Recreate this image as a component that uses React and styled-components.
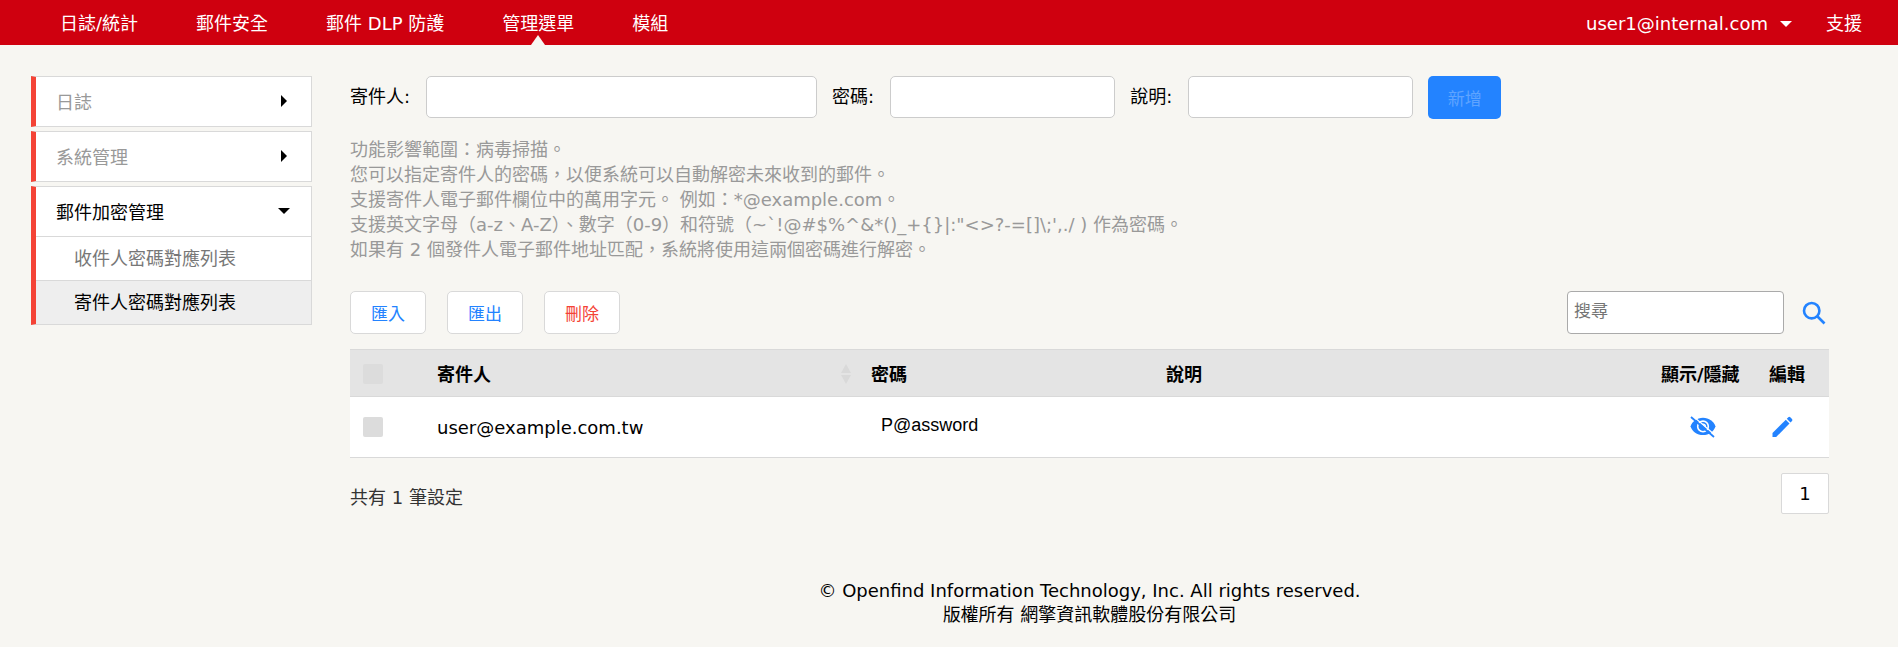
import React, { useState } from "react";
import styled, { createGlobalStyle } from "styled-components";

const menus = ["日誌/統計", "郵件安全", "郵件 DLP 防護", "管理選單", "模組"];

const notes = [
  "功能影響範圍：病毒掃描。",
  "您可以指定寄件人的密碼，以便系統可以自動解密未來收到的郵件。",
  "支援寄件人電子郵件欄位中的萬用字元。 例如：*@example.com。",
  "支援英文字母（a-z、A-Z）、數字（0-9）和符號（~`!@#$%^&*()_+{}|:\"<>?-=[]\\;',./ ) 作為密碼。",
  "如果有 2 個發件人電子郵件地址匹配，系統將使用這兩個密碼進行解密。",
];

const rows = [{ sender: "user@example.com.tw", password: "P@assword", note: "" }];

const SearchIcon = () => (
  <svg width="24" height="24" viewBox="0 0 24 24" fill="none" aria-hidden="true">
    <circle cx="9.700" cy="9.700" r="7.700" stroke="#2383ff" strokeWidth="2.600" />
    <path stroke="#2383ff" strokeWidth="2.600" d="M15 15L22.500 22.500" />
  </svg>
);

const EyeOff = () => (
  <svg width="26" height="22" viewBox="0 0 26 22" fill="none" aria-hidden="true">
    <path
      fill="#2383ff"
      d="M13 1.800C7 1.800 2.300 5.300 .5 10.400C2.300 15.500 7 19 13 19S23.700 15.500 25.500 10.400C23.700 5.300 19 1.800 13 1.800Z"
    />
    <circle cx="13" cy="10.400" r="5.300" stroke="#fff" strokeWidth="1.600" />
    <path stroke="#fff" strokeWidth="1.400" d="M12.500 8.200A2.300 2.300 0 0 1 15.300 11" />
    <path stroke="#fff" strokeWidth="1.200" d="M3.500 .5L25.500 19.500" />
    <path stroke="#2383ff" strokeWidth="1.800" d="M1 1L24 21" />
  </svg>
);

const PencilIcon = () => (
  <svg width="22" height="22" viewBox="0 0 22 22" fill="#2383ff" aria-hidden="true">
    <path d="M.5 17L13.800 3.700L17.500 7.400L4.200 21H.5Z" />
    <path d="M14.800 2.700L16.300 1.200Q17.300 .3 18.300 1.200L20 2.900Q20.900 3.900 20 4.900L18.500 6.400Z" />
  </svg>
);

const App = () => {
  const [form, setForm] = useState({ sender: "", password: "", note: "" });

  const update = (e) => setForm({ ...form, [e.target.name]: e.target.value });

  return (
    <>
      <GlobalStyle />
      <Header>
        <Nav>
          {menus.map((menu) => (
            <NavLink key={menu} href="#" $active={menu === "管理選單"}>
              {menu}
            </NavLink>
          ))}
        </Nav>
        <Account>
          <UserButton type="button">
            user1@internal.com
            <Arrow $down $color="#fff" />
          </UserButton>
          <a href="#">支援</a>
        </Account>
      </Header>

      <Layout>
        <Sidebar>
          <Panel>
            <PanelTitle type="button">
              日誌
              <Arrow />
            </PanelTitle>
          </Panel>
          <Panel>
            <PanelTitle type="button">
              系統管理
              <Arrow />
            </PanelTitle>
          </Panel>
          <Panel>
            <PanelTitle type="button" $active>
              郵件加密管理
              <Arrow $down />
            </PanelTitle>
            <SubLink href="#">收件人密碼對應列表</SubLink>
            <SubLink href="#" $active>
              寄件人密碼對應列表
            </SubLink>
          </Panel>
        </Sidebar>

        <Content>
          <Form onSubmit={(e) => e.preventDefault()}>
            <Field>
              寄件人:
              <TextInput $wide name="sender" value={form.sender} onChange={update} />
            </Field>
            <Field>
              密碼:
              <TextInput name="password" value={form.password} onChange={update} />
            </Field>
            <Field>
              說明:
              <TextInput name="note" value={form.note} onChange={update} />
            </Field>
            <AddButton disabled={!form.sender || !form.password}>新增</AddButton>
          </Form>

          <Notes>
            {notes.map((note) => (
              <p key={note}>{note}</p>
            ))}
          </Notes>

          <Toolbar>
            <ToolButton type="button">匯入</ToolButton>
            <ToolButton type="button">匯出</ToolButton>
            <ToolButton type="button" $danger>
              刪除
            </ToolButton>
            <Search>
              <SearchInput type="text" placeholder="搜尋" aria-label="搜尋" />
              <IconButton type="button" aria-label="搜尋">
                <SearchIcon />
              </IconButton>
            </Search>
          </Toolbar>

          <Table>
            <thead>
              <tr>
                <Th $width={75}>
                  <Checkbox type="checkbox" aria-label="全選" />
                </Th>
                <Th $width={434}>
                  <Sortable>
                    寄件人
                    <svg width="10" height="20" viewBox="0 0 10 20" fill="#d9d9d9">
                      <path d="M5 0L10 9H0ZM5 20L0 11H10Z" />
                    </svg>
                  </Sortable>
                </Th>
                <Th $width={295}>密碼</Th>
                <Th>說明</Th>
                <Th $width={108}>顯示/隱藏</Th>
                <Th $width={72}>編輯</Th>
              </tr>
            </thead>
            <tbody>
              {rows.map((row) => (
                <tr key={row.sender}>
                  <Td>
                    <Checkbox type="checkbox" aria-label={row.sender} />
                  </Td>
                  <Td>{row.sender}</Td>
                  <Td>
                    <PasswordInput readOnly value={row.password} aria-label="密碼" />
                  </Td>
                  <Td>{row.note}</Td>
                  <Td>
                    <IconButton type="button" aria-label="顯示/隱藏" $center>
                      <EyeOff />
                    </IconButton>
                  </Td>
                  <Td>
                    <IconButton type="button" aria-label="編輯">
                      <PencilIcon />
                    </IconButton>
                  </Td>
                </tr>
              ))}
            </tbody>
          </Table>

          <Pager>
            <Total>共有 1 筆設定</Total>
            <PageButton type="button">1</PageButton>
          </Pager>

          <Footer>
            <p>© Openfind Information Technology, Inc. All rights reserved.</p>
            <p>版權所有 網擎資訊軟體股份有限公司</p>
          </Footer>
        </Content>
      </Layout>
    </>
  );
};

const GlobalStyle = createGlobalStyle`
  * {
    box-sizing: border-box;
  }

  body {
    margin: 0;
    background-color: #f7f6f2;
    color: #000;
    font-size: 18px;
    line-height: 25px;
  }

  body, button, input {
    font-family: "DejaVu Sans", "Noto Sans CJK TC", sans-serif;
  }

  button, input {
    font-size: 18px;
  }

  button {
    cursor: pointer;
  }

  a {
    color: inherit;
    text-decoration: none;
  }

  p {
    margin: 0;
  }
`;

const Header = styled.header`
  display: flex;
  justify-content: space-between;
  height: 45px;
  padding: 0 36px 0 31px;
  background-color: #cf000f;
  color: #fff;
`;

const Nav = styled.nav`
  display: flex;
`;

const NavLink = styled.a`
  position: relative;
  padding: 0 29px;
  line-height: 47px;

  &::after {
    content: "";
    display: ${(props) => (props.$active ? "block" : "none")};
    position: absolute;
    bottom: 0;
    left: 50%;
    margin-left: -7px;
    border: 7px solid transparent;
    border-top: 0;
    border-bottom: 10px solid #f7f6f2;
  }
`;

const Account = styled.div`
  display: flex;
  align-items: center;
  gap: 34px;
  padding-top: 2px;
`;

const UserButton = styled.button`
  display: flex;
  align-items: center;
  gap: 12px;
  padding: 0;
  border: 0;
  background: none;
  color: #fff;
`;

const Arrow = styled.span`
  flex: none;
  border: 6px solid transparent;
  ${(props) =>
    props.$down
      ? `border-top-color: ${props.$color || "#000"}; border-bottom: 0;`
      : "border-left-color: #000; border-right: 0; margin-right: 3px;"}
`;

const Layout = styled.div`
  display: flex;
  gap: 38px;
  padding: 31px 69px 0 31px;
`;

const Sidebar = styled.aside`
  display: flex;
  flex: none;
  flex-direction: column;
  gap: 4px;
  width: 281px;
`;

const Panel = styled.section`
  border: 1px solid #d9d9d9;
  border-left: 5px solid #f44336;
  background-color: #fff;
`;

const PanelTitle = styled.button`
  display: flex;
  align-items: center;
  justify-content: space-between;
  width: 100%;
  height: 49px;
  padding: 0 21px 2px 20px;
  border: 0;
  background: none;
  color: ${(props) => (props.$active ? "#000" : "#999")};
`;

const SubLink = styled.a`
  display: block;
  height: 44px;
  padding-left: 38px;
  border-top: 1px solid #d9d9d9;
  background-color: ${(props) => (props.$active ? "#eee" : "#fff")};
  color: ${(props) => (props.$active ? "#000" : "#777")};
  line-height: 44px;
`;

const Content = styled.main`
  flex: 1;
  min-width: 0;
`;

const Form = styled.form`
  display: flex;
  flex-wrap: wrap;
  align-items: flex-start;
  gap: 15px;
`;

const Field = styled.label`
  display: flex;
  align-items: center;
  gap: 16px;
  line-height: 42px;
`;

const TextInput = styled.input`
  width: ${(props) => (props.$wide ? 391 : 225)}px;
  height: 42px;
  padding: 0 8px;
  border: 1px solid #ccc;
  border-radius: 5px;
  background-color: #fff;
`;

const AddButton = styled.button`
  width: 73px;
  height: 43px;
  padding: 0;
  border: 0;
  border-radius: 5px;
  background-color: #2383ff;
  color: #fff;
  font-size: 17px;

  &:disabled {
    color: #5ea4ff;
  }
`;

const Notes = styled.div`
  margin-top: 18px;
  color: #999;
`;

const Toolbar = styled.div`
  display: flex;
  gap: 21px;
  margin-top: 29px;
`;

const ToolButton = styled.button`
  width: 76px;
  height: 43px;
  padding: 0;
  border: 1px solid #d9d9d9;
  border-radius: 5px;
  background-color: #fff;
  color: ${(props) => (props.$danger ? "#f44336" : "#2383ff")};
  font-size: 17px;
`;

const Search = styled.div`
  display: flex;
  align-items: center;
  gap: 15px;
  margin-left: auto;
`;

const SearchInput = styled.input`
  width: 217px;
  height: 43px;
  padding: 0 6px 3px;
  border: 1px solid #aaa;
  border-radius: 4px;
  background-color: #fff;
  font-size: 17px;
`;

const IconButton = styled.button`
  display: flex;
  margin: ${(props) => (props.$center ? "0 auto" : "0")};
  padding: 3px;
  border: 0;
  background: none;
`;

const Table = styled.table`
  width: 100%;
  margin-top: 15px;
  border-collapse: collapse;
  table-layout: fixed;
`;

const Th = styled.th`
  width: ${(props) => (props.$width ? `${props.$width}px` : "auto")};
  height: 47px;
  padding: 2px 12px 0;
  border-top: 1px solid #d9d9d9;
  border-bottom: 1px solid #d9d9d9;
  background-color: #e4e4e4;
  text-align: left;
  white-space: nowrap;
`;

const Td = styled.td`
  height: 61px;
  padding: 0 12px;
  border-bottom: 1px solid #d9d9d9;
  background-color: #fff;
`;

const Sortable = styled.span`
  display: flex;
  align-items: center;
  justify-content: space-between;
  margin-right: -4px;
`;

const Checkbox = styled.input`
  display: block;
  appearance: none;
  width: 20px;
  height: 20px;
  margin: 0 1px;
  border-radius: 2px;
  background-color: #dcdcdc;

  &:checked {
    background-color: #2383ff;
  }
`;

const PasswordInput = styled.input`
  display: block;
  width: 100%;
  padding: 0 10px 3px;
  border: 0;
  background: none;
  font-family: "Liberation Sans", Arial, sans-serif;
`;

const Pager = styled.div`
  display: flex;
  align-items: center;
  justify-content: space-between;
  margin-top: 15px;
`;

const Total = styled.span`
  padding-top: 8px;
  color: #333;
`;

const PageButton = styled.button`
  width: 48px;
  height: 41px;
  padding: 0;
  border: 1px solid #d9d9d9;
  border-radius: 2px;
  background-color: #fff;
`;

const Footer = styled.footer`
  margin-top: 65px;
  line-height: 24px;
  text-align: center;
`;

export default App;
